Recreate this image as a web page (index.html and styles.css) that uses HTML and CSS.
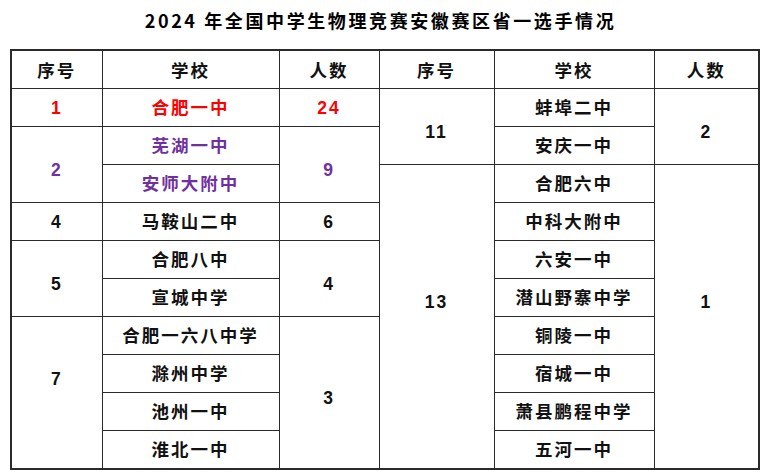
FILE: index.html
```html
<!DOCTYPE html>
<html lang="zh">
<head>
<meta charset="utf-8">
<title>2024 年全国中学生物理竞赛安徽赛区省一选手情况</title>
<link rel="stylesheet" href="styles.css">
</head>
<body>
<div class="title">2024 年全国中学生物理竞赛安徽赛区省一选手情况</div>
<table class="grid">
  <colgroup>
    <col class="c1"><col class="c2"><col class="c3"><col class="c4"><col class="c5"><col class="c6">
  </colgroup>
  <tr>
    <th>序号</th><th>学校</th><th>人数</th><th>序号</th><th>学校</th><th>人数</th>
  </tr>
  <tr>
    <td class="red">1</td><td class="red">合肥一中</td><td class="red">24</td>
    <td rowspan="2" class="dn">11</td><td>蚌埠二中</td><td rowspan="2" class="dn">2</td>
  </tr>
  <tr>
    <td rowspan="2" class="purple dn">2</td><td class="purple">芜湖一中</td><td rowspan="2" class="purple dn">9</td>
    <td>安庆一中</td>
  </tr>
  <tr>
    <td class="purple">安师大附中</td>
    <td rowspan="8" class="up">13</td><td>合肥六中</td><td rowspan="8" class="up">1</td>
  </tr>
  <tr>
    <td>4</td><td>马鞍山二中</td><td>6</td><td>中科大附中</td>
  </tr>
  <tr>
    <td rowspan="2" class="dn">5</td><td>合肥八中</td><td rowspan="2" class="dn">4</td><td>六安一中</td>
  </tr>
  <tr>
    <td>宣城中学</td><td>潜山野寨中学</td>
  </tr>
  <tr>
    <td rowspan="4" class="up7">7</td><td>合肥一六八中学</td><td rowspan="4" class="dn">3</td><td>铜陵一中</td>
  </tr>
  <tr>
    <td>滁州中学</td><td>宿城一中</td>
  </tr>
  <tr>
    <td>池州一中</td><td>萧县鹏程中学</td>
  </tr>
  <tr>
    <td>淮北一中</td><td>五河一中</td>
  </tr>
</table>
</body>
</html>
```

FILE: styles.css
```css
html, body {
  margin: 0;
  padding: 0;
  background: #ffffff;
}

body {
  width: 771px;
  height: 475px;
  overflow: hidden;
  font-family: "Liberation Sans", "Noto Sans CJK SC", sans-serif;
  color: #111111;
}

.title {
  height: 49px;
  line-height: 41px;
  text-align: center;
  font-family: "Noto Sans CJK SC", sans-serif;
  font-weight: bold;
  font-size: 18px;
  letter-spacing: 2.6px;
  color: #000000;
  padding-right: 10px;
}

.grid {
  margin-left: 10px;
  width: 748px;
  table-layout: fixed;
  border-collapse: collapse;
  border: 2px solid #2a2a2a;
}

.c1 { width: 91px; }
.c2 { width: 177px; }
.c3 { width: 100px; }
.c4 { width: 115px; }
.c5 { width: 160px; }
.c6 { width: 105px; }

.grid th,
.grid td {
  border: 1px solid #2a2a2a;
  height: 37px;
  padding: 0;
  text-align: center;
  vertical-align: middle;
  font-weight: bold;
  font-size: 17.5px;
  letter-spacing: 2px;
  line-height: 20px;
}

.grid th {
  font-family: "Noto Sans CJK SC", sans-serif;
}

.red { color: #ff0000; }
.purple { color: #7030a0; }

.grid td.dn { padding-top: 10px; }
.grid td.up { padding-bottom: 30px; }
.grid td.up7 { padding-bottom: 28px; }
```
